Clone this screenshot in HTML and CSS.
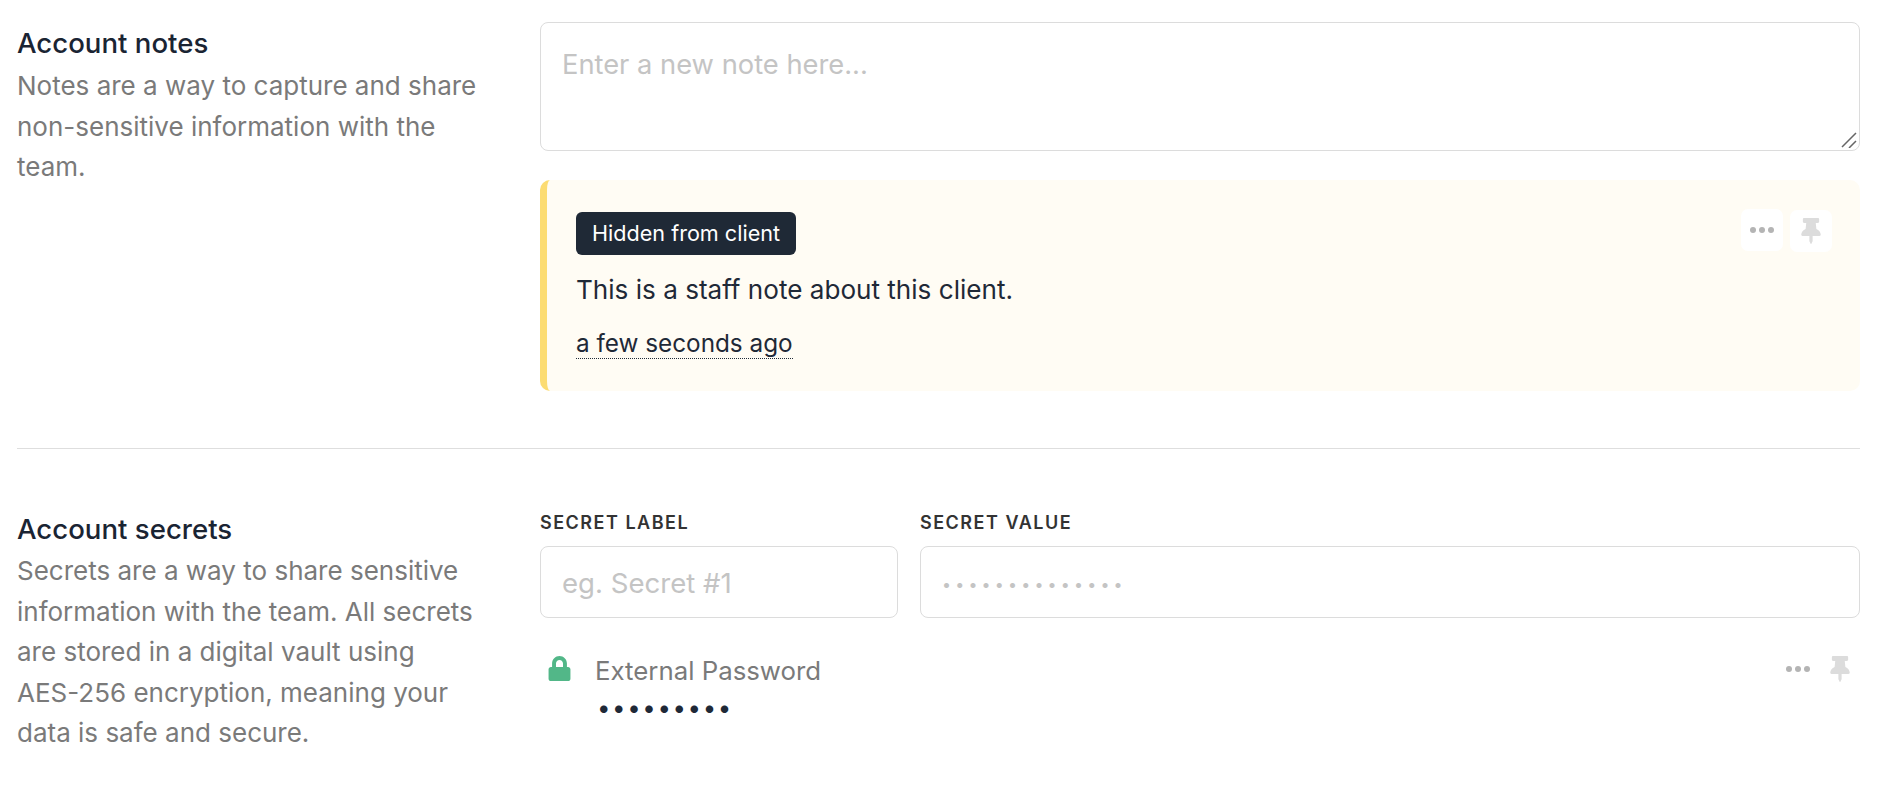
FILE: index.html
```html
<!DOCTYPE html>
<html lang="en">
<head>
<meta charset="utf-8">
<title>Account</title>
<link rel="stylesheet" href="styles.css">
</head>
<body>
<main class="page">
  <section class="row row-notes">
    <div class="intro">
      <h2 class="title">Account notes</h2>
      <p class="desc">Notes are a way to capture and share non-sensitive information with the team.</p>
    </div>
    <div class="content">
      <div class="note-input-wrap">
        <textarea class="field note-input" placeholder="Enter a new note here..."></textarea>
        <svg class="resize-grip" viewBox="0 0 16 16"><path d="M1 15L15 1M8 16L15 9"/></svg>
      </div>
      <article class="note">
        <div class="note-body">
          <span class="tag">Hidden from client</span>
          <p class="note-text">This is a staff note about this client.</p>
          <time class="note-time">a few seconds ago</time>
        </div>
        <div class="note-actions">
          <button class="icon-btn" type="button" aria-label="More">
            <svg class="dots-icon" viewBox="0 0 24 6"><circle cx="3" cy="3" r="3"/><circle cx="12" cy="3" r="3"/><circle cx="21" cy="3" r="3"/></svg>
          </button>
          <button class="icon-btn icon-btn-pin" type="button" aria-label="Pin">
            <svg class="pin-icon" viewBox="0 0 384 512"><path d="M298.028 214.267L285.793 96H328c13.255 0 24-10.745 24-24V24c0-13.255-10.745-24-24-24H56C42.745 0 32 10.745 32 24v48c0 13.255 10.745 24 24 24h42.207L85.972 214.267C37.465 236.82 0 277.261 0 328c0 13.255 10.745 24 24 24h136v104.007c0 1.242.289 2.467.845 3.578l24 48c2.941 5.882 11.364 5.893 14.311 0l24-48a8.008 8.008 0 0 0 .845-3.578V352h136c13.255 0 24-10.745 24-24-.001-51.183-37.983-91.42-85.973-113.733z"/></svg>
          </button>
        </div>
      </article>
    </div>
  </section>
  <hr class="divider">
  <section class="row row-secrets">
    <div class="intro">
      <h2 class="title">Account secrets</h2>
      <p class="desc">Secrets are a way to share sensitive information with the team. All secrets are stored in a digital vault using AES-256 encryption, meaning your data is safe and secure.</p>
    </div>
    <div class="content">
      <div class="secret-form">
        <label class="secret-field secret-label-field">
          <span class="label">Secret label</span>
          <input class="field text-input" type="text" placeholder="eg. Secret #1">
        </label>
        <label class="secret-field secret-value-field">
          <span class="label">Secret value</span>
          <input class="field text-input dots-input" type="text" placeholder="••••••••••••••">
        </label>
      </div>
      <div class="secret">
        <svg class="lock-icon" viewBox="0 0 448 512"><path d="M400 224h-24v-72C376 68.2 307.8 0 224 0S72 68.2 72 152v72H48c-26.5 0-48 21.5-48 48v192c0 26.5 21.5 48 48 48h352c26.5 0 48-21.5 48-48V272c0-26.5-21.5-48-48-48zm-104 0H152v-72c0-39.7 32.3-72 72-72s72 32.3 72 72v72z"/></svg>
        <div class="secret-body">
          <div class="secret-name">External Password</div>
          <div class="secret-mask">•••••••••</div>
        </div>
        <div class="secret-actions">
          <svg class="dots-icon" viewBox="0 0 24 6"><circle cx="3" cy="3" r="3"/><circle cx="12" cy="3" r="3"/><circle cx="21" cy="3" r="3"/></svg>
          <svg class="pin-icon" viewBox="0 0 384 512"><path d="M298.028 214.267L285.793 96H328c13.255 0 24-10.745 24-24V24c0-13.255-10.745-24-24-24H56C42.745 0 32 10.745 32 24v48c0 13.255 10.745 24 24 24h42.207L85.972 214.267C37.465 236.82 0 277.261 0 328c0 13.255 10.745 24 24 24h136v104.007c0 1.242.289 2.467.845 3.578l24 48c2.941 5.882 11.364 5.893 14.311 0l24-48a8.008 8.008 0 0 0 .845-3.578V352h136c13.255 0 24-10.745 24-24-.001-51.183-37.983-91.42-85.973-113.733z"/></svg>
        </div>
      </div>
    </div>
  </section>
</main>
</body>
</html>
```
FILE: styles.css
```css
* { box-sizing: border-box; }
html, body { margin: 0; padding: 0; background: #fff; }
body {
  font-family: Inter, "Liberation Sans", sans-serif;
  color: #1f2937;
  height: 792px;
  overflow: hidden;
}
.page { padding: 22px 26px 0 17px; }
.row { display: grid; grid-template-columns: 523px 1fr; }
.row-notes { padding-bottom: 57px; }
.row-secrets { padding-top: 60px; }
.intro { padding-right: 62px; padding-top: 1px; }
.row-secrets .intro { padding-top: 0; }
.row-secrets .content { padding-top: 3px; }
.title {
  margin: 0 0 2px;
  font-size: 27.6px;
  line-height: 41px;
  font-weight: 500;
  color: #1a2433;
}
.row-secrets .title { margin-bottom: 1px; }
.desc {
  margin: 0;
  font-size: 26px;
  line-height: 40.5px;
  color: #7a7a7a;
}
.content { min-width: 0; }
.field {
  display: block;
  width: 100%;
  border: 1px solid #dcdcdc;
  border-radius: 8px;
  background: #fff;
  font-family: inherit;
  font-size: 27.6px;
  color: #1f2937;
  outline: none;
}
.field::placeholder { color: #c4c4c4; opacity: 1; }
.note-input-wrap { position: relative; }
.note-input { height: 129px; padding: 24px 21px; font-size: 27.3px; line-height: 36px; resize: none; }
.resize-grip {
  position: absolute;
  right: 3px;
  bottom: 3px;
  width: 16px;
  height: 16px;
  fill: none;
  stroke: #666;
  stroke-width: 1.5;
}
.note {
  display: flex;
  justify-content: space-between;
  margin-top: 29px;
  height: 211px;
  background: #fffcf4;
  border-left: 7px solid #fcdc72;
  border-radius: 10px;
  padding: 32px 28px 0 29px;
}
.tag {
  display: inline-block;
  height: 43px;
  padding: 0 16px;
  border-radius: 6px;
  background: #1f2936;
  color: #fff;
  font-size: 21.6px;
  line-height: 43px;
}
.note-text { margin: 18px 0 0; font-size: 26.1px; line-height: 34px; }
.note-time {
  display: inline-block;
  margin-top: 21px;
  font-size: 24.3px;
  line-height: 30px;
  border-bottom: 1px dotted #1f2937;
}
.note-actions { display: flex; gap: 7px; align-items: flex-start; }
.icon-btn {
  display: flex;
  align-items: center;
  justify-content: center;
  width: 42px;
  height: 42px;
  padding: 0;
  border: 0;
  border-radius: 7px;
  background: #fff;
  margin-top: -3px;
}
.icon-btn-pin { margin-top: -2px; }
.dots-icon { width: 24px; height: 6px; fill: #b4b4b4; }
.pin-icon { width: 20px; height: 26px; fill: #dcdcdc; }
.secret-form { display: grid; grid-template-columns: 358px 1fr; gap: 22px; }
.label {
  display: block;
  font-size: 18px;
  line-height: 22px;
  font-weight: 600;
  letter-spacing: 1.5px;
  text-transform: uppercase;
  color: #333;
  margin-bottom: 12px;
}
.text-input { height: 72px; padding: 1px 21px 0; }
.dots-input { padding: 0 21px 4px; }
.dots-input::placeholder { letter-spacing: 4.2px; font-size: 16px; }
.secret { display: flex; align-items: flex-start; margin-top: 38px; padding-left: 8px; }
.lock-icon { width: 23px; height: 25px; fill: #52b788; flex: none; }
.secret-body { margin-left: 24px; flex: 1; }
.secret-name { font-size: 25.8px; line-height: 34px; color: #7a7a7a; margin-top: -2px; }
.secret-mask { font-size: 24px; line-height: 30px; letter-spacing: 1.6px; color: #1f2937; margin-top: 5px; padding-left: 2px; }
.secret-actions { display: flex; align-items: flex-start; gap: 20px; padding-right: 10px; }
.secret-actions .dots-icon { margin-top: 10px; }
.divider { margin: 0; border: 0; border-top: 1px solid #dedede; }
```
